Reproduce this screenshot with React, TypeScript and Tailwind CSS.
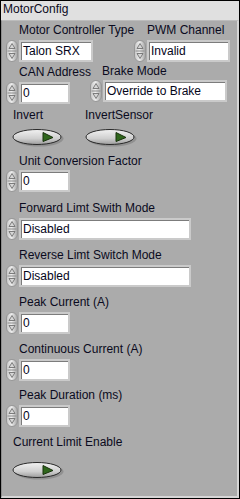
import React from "react";

function Spin() {
  return (
    <svg width="12" height="22" viewBox="0 0 12 22" className="shrink-0 block">
      <defs>
        <linearGradient id="spg" x1="0" y1="0" x2="1" y2="0">
          <stop offset="0" stopColor="#c4c4c4" />
          <stop offset="0.45" stopColor="#eeeeee" />
          <stop offset="1" stopColor="#a2a2a2" />
        </linearGradient>
      </defs>
      <rect x="0.5" y="0.5" width="11" height="21" rx="5.5" fill="url(#spg)" stroke="#969696" />
      <line x1="1.5" y1="11" x2="10.5" y2="11" stroke="#8c8c8c" />
      <path d="M6 3.5 L9 8.5 L3 8.5 Z" fill="#d6d6d6" stroke="#707070" strokeWidth="0.9" />
      <path d="M3 13.5 L9 13.5 L6 18.5 Z" fill="#d6d6d6" stroke="#707070" strokeWidth="0.9" />
    </svg>
  );
}

function Box({ w, text }: { w: string; text: string }) {
  return (
    <div
      className={`${w} h-[22px] bg-white border-2 border-[#cacaca] shadow-[inset_1px_1px_0_#7c7c7c] flex items-center pl-[2px] text-[12px] leading-[14px] text-[#05051a] whitespace-nowrap overflow-hidden`}
    >
      {text}
    </div>
  );
}

function Switch() {
  return (
    <svg width="52" height="19" viewBox="0 0 52 19" className="block">
      <defs>
        <linearGradient id="swg" x1="0" y1="0" x2="0" y2="1">
          <stop offset="0" stopColor="#f2f2f2" />
          <stop offset="0.6" stopColor="#cfcfcf" />
          <stop offset="1" stopColor="#9c9c9c" />
        </linearGradient>
      </defs>
      <ellipse cx="27" cy="10.5" rx="24.5" ry="8" fill="#7e7e7e" opacity="0.6" />
      <ellipse cx="25" cy="9" rx="24" ry="7.5" fill="url(#swg)" stroke="#2a2a2a" strokeWidth="1" />
      <path d="M31 4.5 L41 9.5 L31 13.5 Z" fill="#2f661c" stroke="#18320c" strokeWidth="1" />
    </svg>
  );
}

function Field({ label, value, w, mt }: { label: string; value: string; w: string; mt: string }) {
  return (
    <div className={`flex flex-col ${mt}`}>
      <div className="pl-[13px] text-[12px] leading-[14px] whitespace-nowrap">{label}</div>
      <div className="flex gap-[1px] mt-[3px]">
        <Spin />
        <Box w={w} text={value} />
      </div>
    </div>
  );
}

export default function App() {
  return (
    <div className="w-[240px] h-[499px] bg-black p-[1px] flex flex-col font-['Liberation_Sans',Arial,sans-serif] text-[#0a0a20]">
      <div className="h-[19px] bg-[#e0e0e0] pl-[2px] text-[12px] leading-[14px] pt-[1px] shrink-0">MotorConfig</div>
      <div className="flex-1 bg-[#ababab] border-t border-t-[#bcbcbc] border-l border-l-[#8e8e8e] border-r-2 border-r-[#d6d6d6] border-b-2 border-b-[#d6d6d6] pl-[4px] flex flex-col">
        {/* Row 1 */}
        <div className="flex mt-[2px]">
          <div className="w-[128px] shrink-0 flex flex-col">
            <div className="pl-[13px] text-[12px] leading-[14px] whitespace-nowrap">Motor Controller Type</div>
            <div className="flex gap-[1px] mt-[3px]">
              <Spin />
              <Box w="w-[74px]" text="Talon SRX" />
            </div>
          </div>
          <div className="flex flex-col">
            <div className="pl-[13px] text-[12px] leading-[14px] whitespace-nowrap">PWM Channel</div>
            <div className="flex gap-[1px] mt-[3px]">
              <Spin />
              <Box w="w-[83px]" text="Invalid" />
            </div>
          </div>
        </div>
        {/* Row 2 */}
        <div className="flex items-start">
          <div className="w-[84px] shrink-0 flex flex-col mt-[3px]">
            <div className="pl-[13px] text-[12px] leading-[14px] whitespace-nowrap">CAN Address</div>
            <div className="flex gap-[1px] mt-[3px]">
              <Spin />
              <Box w="w-[51px]" text="0" />
            </div>
          </div>
          <div className="flex flex-col mt-[2px]">
            <div className="pl-[12px] text-[12px] leading-[14px] whitespace-nowrap">Brake Mode</div>
            <div className="flex gap-[1px] mt-[2px]">
              <Spin />
              <Box w="w-[124px]" text="Override to Brake" />
            </div>
          </div>
        </div>
        {/* Row 3 */}
        <div className="flex mt-[4px] pl-[6px]">
          <div className="w-[73px] shrink-0 flex flex-col">
            <div className="pl-[1px] text-[12px] leading-[14px]">Invert</div>
            <div className="mt-[6px]"><Switch /></div>
          </div>
          <div className="flex flex-col">
            <div className="text-[12px] leading-[14px]">InvertSensor</div>
            <div className="mt-[6px]"><Switch /></div>
          </div>
        </div>
        <div className="flex flex-col mt-[7px]">
          <div className="pl-[13px] text-[12px] leading-[14px] whitespace-nowrap">Unit Conversion Factor</div>
          <div className="flex gap-[1px] mt-[2px]">
            <Spin />
            <Box w="w-[51px]" text="0" />
          </div>
        </div>
        <Field mt="mt-[9px]" label="Forward Limt Swith Mode" value="Disabled" w="w-[172px]" />
        <Field mt="mt-[8px]" label="Reverse Limt Switch Mode" value="Disabled" w="w-[172px]" />
        <Field mt="mt-[8px]" label="Peak Current (A)" value="0" w="w-[51px]" />
        <Field mt="mt-[8px]" label="Continuous Current (A)" value="0" w="w-[51px]" />
        <Field mt="mt-[7px]" label="Peak Duration (ms)" value="0" w="w-[51px]" />
        <div className="flex flex-col mt-[8px] pl-[6px]">
          <div className="pl-[1px] text-[12px] leading-[14px] whitespace-nowrap">Current Limit Enable</div>
          <div className="mt-[12px]"><Switch /></div>
        </div>
      </div>
    </div>
  );
}
